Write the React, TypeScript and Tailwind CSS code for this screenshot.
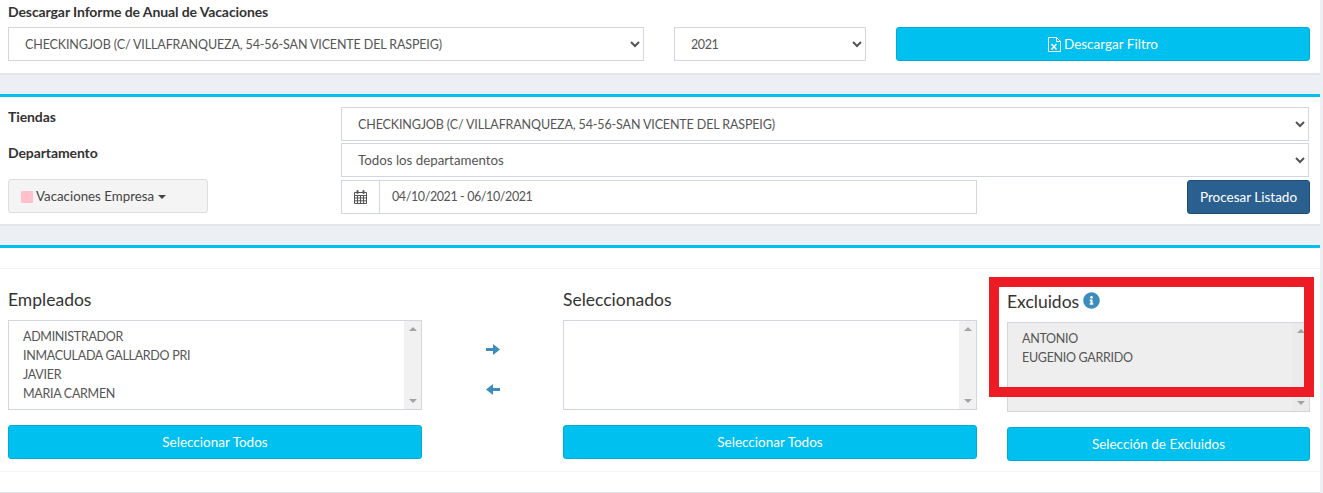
import React from 'react';
import { FaInfoCircle } from 'react-icons/fa';

const STORE = 'CHECKINGJOB (C/ VILLAFRANQUEZA, 54-56-SAN VICENTE DEL RASPEIG)';

const selectClass =
  'h-[34px] border border-[#d2d6de] bg-white pl-3 text-[#555] outline-none';
const storeText = 'text-[12.5px] tracking-[-0.13px]';

const CalendarIcon = () => (
  <svg width="13" height="14" viewBox="0 0 13 14" className="text-[#555]">
    <path
      d="M.5 2.5h12v11H.5zM.5 5.5h12M.5 8h12M.5 10.8h12M3.5 5.5v8M6.5 5.5v8M9.5 5.5v8"
      fill="none"
      stroke="currentColor"
    />
    <rect x="2.5" y="0" width="2" height="4" rx="1" fill="currentColor" />
    <rect x="8.5" y="0" width="2" height="4" rx="1" fill="currentColor" />
  </svg>
);

const ExcelIcon = () => (
  <svg width="13" height="15" viewBox="0 0 13 15" fill="none" stroke="currentColor">
    <path d="M.5.5h8l4 4v10H.5zM8.5.5v4h4" />
    <path d="M3.5 7l5 5.5M8.5 7l-5 5.5" strokeWidth="1.5" />
  </svg>
);

const ArrowIcon = ({ left = false }: { left?: boolean }) => (
  <svg width="14" height="11" viewBox="0 0 14 11" className={left ? 'mt-[29px] -scale-x-100' : ''}>
    <path d="M0 4h7V0l7 5.5-7 5.5V7H0z" fill="currentColor" />
  </svg>
);

const CyanButton = ({ children, className = '' }: { children: React.ReactNode; className?: string }) => (
  <button
    type="button"
    className={`flex h-[34px] items-center justify-center rounded-[3px] border border-[#00acd6] bg-[#00c0ef] pt-px text-[13.5px] text-white ${className}`}
  >
    {children}
  </button>
);

const ListBox = ({ items, disabled = false }: { items: string[]; disabled?: boolean }) => (
  <div className={`flex h-[90px] border border-[#d2d6de] ${disabled ? 'bg-[#eeeeee]' : 'bg-white'}`}>
    <div className="flex-1 pl-[14px] pt-[6px] text-[12.5px] leading-[19px] tracking-[-0.3px] text-[#555]">
      {items.map((item) => (
        <div key={item}>{item}</div>
      ))}
    </div>
    <div className={`flex w-[17px] flex-col items-center justify-between py-[6px] ${disabled ? 'bg-[#ebebeb]' : 'bg-[#f1f1f1]'}`}>
      <div className="h-0 w-0 border-x-[4px] border-b-[4px] border-x-transparent border-b-[#a3a3a3]" />
      <div className="h-0 w-0 border-x-[4px] border-t-[4px] border-x-transparent border-t-[#a3a3a3]" />
    </div>
  </div>
);

export default function App() {
  return (
    <div className="relative h-[493px] w-[1323px] overflow-hidden bg-[#ecf0f5] font-['Lato','Noto_Sans',sans-serif]">
      <div className="w-[1320px]">
        {/* Annual report download */}
        <section className="h-[75px] border-b-2 border-[#e3e5e8] bg-white px-2">
          <div className="h-[27px] pt-[3px] text-[14px] font-bold leading-[18px] tracking-[-0.1px] text-[#333]">
            Descargar Informe de Anual de Vacaciones
          </div>
          <div className="flex gap-[30px]">
            <select className={`${selectClass} ${storeText} w-[636px]`}>
              <option>{STORE}</option>
            </select>
            <select className={`${selectClass} w-[192px] text-[12.5px] tracking-[-0.4px]`}>
              <option>2021</option>
            </select>
            <CyanButton className="w-[414px] gap-[3px]">
              <ExcelIcon />
              Descargar Filtro
            </CyanButton>
          </div>
        </section>

        <div className="h-[19px] bg-[#ecf0f5]" />

        {/* Filters */}
        <section className="h-[132px] border-b-2 border-t-[3px] border-b-[#e3e5e8] border-t-[#00c0ef] bg-white pl-2 pr-[11px] pt-[10px]">
          <div className="flex h-[36px]">
            <div className="w-[333px] pt-[1px] text-[14px] font-bold leading-[18px] tracking-[-0.1px] text-[#333]">Tiendas</div>
            <select className={`${selectClass} ${storeText} flex-1`}>
              <option>{STORE}</option>
            </select>
          </div>
          <div className="flex h-[37px]">
            <div className="w-[333px] pt-[1px] text-[14px] font-bold leading-[18px] tracking-[-0.1px] text-[#333]">Departamento</div>
            <select className={`${selectClass} flex-1 text-[13.3px]`}>
              <option>Todos los departamentos</option>
            </select>
          </div>
          <div className="flex items-start">
            <div className="-mt-px w-[333px]">
              <button
                type="button"
                className="flex h-[34px] w-[200px] items-center rounded-[3px] border border-[#ddd] bg-[#f4f4f4] pl-3 pt-px text-[13.3px] text-[#444]"
              >
                <span className="mr-[3px] h-3 w-3 rounded-[1px] bg-[#ffc0cb]" />
                Vacaciones Empresa
                <span className="ml-1 h-0 w-0 border-x-[4px] border-t-[4px] border-x-transparent border-t-[#444]" />
              </button>
            </div>
            <div className="flex h-[34px] w-[636px] border border-[#d2d6de]">
              <div className="flex w-[38px] items-center justify-center border-r border-[#d2d6de]">
                <CalendarIcon />
              </div>
              <div className="flex items-center pl-3 pt-px text-[12.5px] tracking-[-0.4px] text-[#555]">04/10/2021 - 06/10/2021</div>
            </div>
            <button
              type="button"
              className="-mr-px ml-auto h-[34px] w-[123px] rounded-[3px] border border-[#204d74] bg-[#2a6090] pt-px text-[13.5px] text-white"
            >
              Procesar Listado
            </button>
          </div>
        </section>

        <div className="h-[19px] bg-[#ecf0f5]" />

        {/* Employee selection */}
        <section className="border-t-[3px] border-[#00c0ef] bg-white">
          <div className="h-[21px] border-b border-[#f4f4f4]" />
          <div className="flex h-[203px] border-b border-[#f4f4f4] pl-2">
            <div className="w-[414px]">
              <h3 className="h-[51px] pt-[20px] text-[17.5px] leading-[22px] text-[#333]">Empleados</h3>
              <ListBox items={['ADMINISTRADOR', 'INMACULADA GALLARDO PRI', 'JAVIER', 'MARIA CARMEN']} />
              <CyanButton className="mt-[15px] w-full">Seleccionar Todos</CyanButton>
            </div>
            <div className="flex w-[141px] flex-col items-center pt-[75px] text-[#3c8dbc]">
              <ArrowIcon />
              <ArrowIcon left />
            </div>
            <div className="w-[414px]">
              <h3 className="h-[51px] pt-[20px] text-[17.5px] leading-[22px] text-[#333]">Seleccionados</h3>
              <ListBox items={[]} />
              <CyanButton className="mt-[15px] w-full">Seleccionar Todos</CyanButton>
            </div>
            <div className="ml-[30px] w-[303px]">
              <h3 className="flex h-[53px] items-start gap-[4px] pt-[22px] text-[17.5px] leading-[22px] text-[#333]">
                Excluidos
                <FaInfoCircle className="mt-[1px] text-[17px] text-[#3c8dbc]" />
              </h3>
              <ListBox disabled items={['ANTONIO', 'EUGENIO GARRIDO']} />
              <CyanButton className="mt-[15px] w-full">Selección de Excluidos</CyanButton>
            </div>
          </div>
          <div className="h-[22px] border-b-2 border-[#e3e5e8]" />
        </section>
      </div>

      {/* Red highlight drawn over the screenshot */}
      <div className="absolute left-[989px] top-[277px] h-[120px] w-[325px] border-[10px] border-[#ed1c24]" />
    </div>
  );
}
